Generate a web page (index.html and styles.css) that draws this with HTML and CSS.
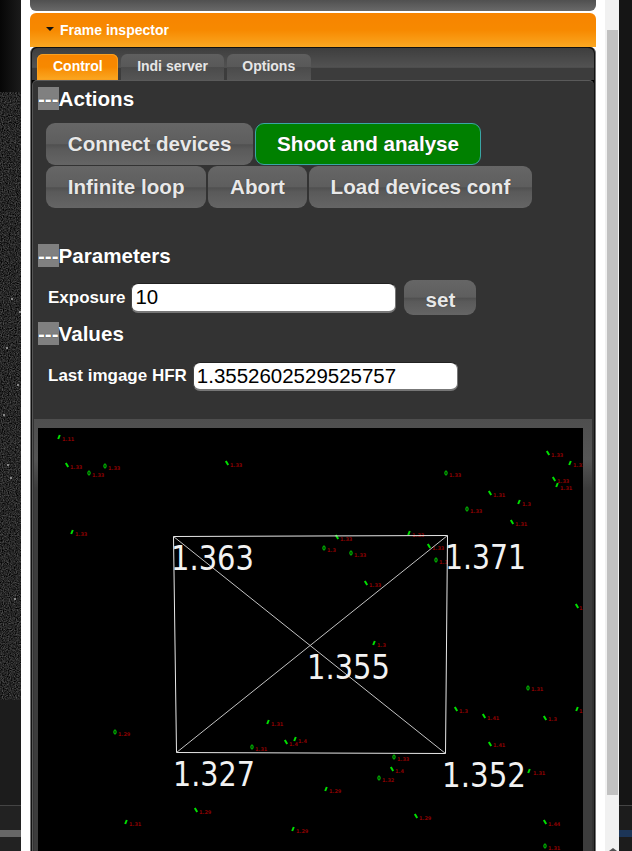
FILE: index.html
```html
<!DOCTYPE html>
<html lang="en">
<head>
<meta charset="utf-8">
<title>Frame inspector</title>
<link rel="stylesheet" href="styles.css">
</head>
<body>
<div class="screen">
  <div class="backdrop backdrop-left">
    <div class="bd-top"></div>
    <svg class="bd-noise" width="21" height="608" viewBox="0 92 21 608">
      <defs>
        <filter id="grain" x="0" y="0" width="100%" height="100%" color-interpolation-filters="sRGB">
          <feTurbulence type="fractalNoise" baseFrequency="0.85" numOctaves="2" seed="4"/>
          <feColorMatrix type="matrix" values="0.5 0 0 0 -0.1  0.5 0 0 0 -0.1  0.5 0 0 0 -0.1  0 0 0 0 1"/>
        </filter>
      </defs>
      <rect x="0" y="92" width="21" height="608" filter="url(#grain)"/>
      <g fill="#888">
        <rect x="11" y="298" width="2" height="2"/><rect x="19" y="311" width="2" height="2"/>
        <rect x="6" y="347" width="2" height="2"/><rect x="17" y="384" width="2" height="2"/>
        <rect x="3" y="414" width="2" height="2"/><rect x="7" y="464" width="2" height="2"/>
        <rect x="10" y="477" width="2" height="2"/><rect x="14" y="598" width="2" height="2"/>
      </g>
    </svg>
    <div class="bd-mid"></div>
    <div class="bd-bottom"><div class="bd-band"></div></div>
  </div>

  <div class="dialog">
    <div class="prev-bar"></div>
    <div class="accordion-head"><span class="caret"></span>Frame inspector</div>
    <div class="tabs">
      <div class="tab-bar">
        <span class="tab tab-active">Control</span>
        <span class="tab">Indi server</span>
        <span class="tab">Options</span>
      </div>
      <div class="tab-panel">
        <h3 class="section"><span class="toggle">---</span>Actions</h3>
        <div class="actions">
          <button class="btn">Connect devices</button>
          <button class="btn btn-go">Shoot and analyse</button>
          <button class="btn">Infinite loop</button>
          <button class="btn">Abort</button>
          <button class="btn">Load devices conf</button>
        </div>
        <h3 class="section section-params"><span class="toggle">---</span>Parameters</h3>
        <div class="field field-exposure">
          <label class="field-label">Exposure</label>
          <input class="field-input" value="10">
          <button class="btn btn-set">set</button>
        </div>
        <h3 class="section section-values"><span class="toggle">---</span>Values</h3>
        <div class="field field-hfr">
          <label class="field-label">Last imgage HFR</label>
          <input class="field-input" value="1.3552602529525757">
        </div>
        <div class="frame">
          <svg class="frame-img" width="545" height="423" viewBox="38 428 545 423">
            <defs>
              <path id="b" d="M-1.2 -2 L1.2 2"/>
              <path id="f" d="M-0.8 2 L0.8 -2"/>
              <ellipse id="o" cx="0" cy="0" rx="1.1" ry="2.2"/>
            </defs>
            <rect x="38" y="428" width="545" height="423" fill="#000"/>
            <g class="marks">
              <use href="#f" x="59" y="437"/><use href="#b" x="67" y="465"/><use href="#o" x="89" y="473"/>
              <use href="#o" x="105" y="466"/><use href="#b" x="227" y="463"/><use href="#f" x="72" y="532"/>
              <use href="#o" x="324" y="548"/><use href="#b" x="548" y="453"/><use href="#f" x="570" y="463"/>
              <use href="#o" x="446" y="473"/><use href="#b" x="554" y="479"/><use href="#f" x="557" y="485"/>
              <use href="#b" x="490" y="493"/><use href="#f" x="519" y="502"/><use href="#o" x="467" y="509"/>
              <use href="#b" x="512" y="522"/><use href="#f" x="409" y="533"/><use href="#b" x="337" y="537"/>
              <use href="#o" x="351" y="553"/><use href="#b" x="429" y="546"/><use href="#o" x="436" y="560"/>
              <use href="#b" x="366" y="583"/><use href="#b" x="577" y="606"/><use href="#f" x="374" y="643"/>
              <use href="#o" x="115" y="732"/><use href="#f" x="268" y="722"/><use href="#o" x="252" y="747"/>
              <use href="#b" x="286" y="742"/><use href="#f" x="295" y="739"/><use href="#b" x="196" y="810"/>
              <use href="#f" x="126" y="822"/><use href="#f" x="293" y="829"/><use href="#o" x="528" y="688"/>
              <use href="#b" x="456" y="709"/><use href="#b" x="484" y="716"/><use href="#b" x="545" y="718"/>
              <use href="#f" x="577" y="709"/><use href="#b" x="490" y="744"/><use href="#o" x="394" y="757"/>
              <use href="#b" x="392" y="769"/><use href="#o" x="379" y="778"/><use href="#f" x="326" y="789"/>
              <use href="#f" x="529" y="771"/><use href="#b" x="416" y="816"/><use href="#b" x="545" y="822"/>
              <use href="#o" x="545" y="846"/>
            </g>
            <g class="hfr-small">
              <text x="62" y="441">1.11</text><text x="70" y="469">1.33</text><text x="92" y="477">1.33</text>
              <text x="108" y="470">1.33</text><text x="230" y="467">1.33</text><text x="75" y="536">1.33</text>
              <text x="327" y="552">1.3</text><text x="551" y="457">1.33</text><text x="573" y="467">1.33</text>
              <text x="449" y="477">1.33</text><text x="557" y="483">1.33</text><text x="560" y="490">1.31</text>
              <text x="493" y="497">1.31</text><text x="522" y="506">1.3</text><text x="470" y="513">1.33</text>
              <text x="515" y="526">1.31</text><text x="412" y="537">1.33</text><text x="340" y="541">1.33</text>
              <text x="354" y="557">1.33</text><text x="432" y="550">1.33</text><text x="439" y="564">1.3</text>
              <text x="369" y="587">1.33</text><text x="579" y="610">1</text><text x="377" y="647">1.3</text>
              <text x="118" y="736">1.29</text><text x="271" y="726">1.31</text><text x="255" y="751">1.31</text>
              <text x="289" y="746">1.4</text><text x="298" y="743">1.4</text><text x="199" y="814">1.29</text>
              <text x="129" y="826">1.31</text><text x="296" y="833">1.29</text><text x="531" y="691">1.31</text>
              <text x="459" y="713">1.3</text><text x="487" y="720">1.41</text><text x="548" y="721">1.3</text>
              <text x="579" y="713">1</text><text x="493" y="747">1.41</text><text x="397" y="761">1.33</text>
              <text x="395" y="773">1.4</text><text x="382" y="782">1.32</text><text x="329" y="793">1.29</text>
              <text x="533" y="775">1.31</text><text x="419" y="820">1.29</text><text x="548" y="826">1.44</text>
              <text x="548" y="850">1.31</text>
            </g>
            <g class="grid-lines">
              <path d="M173.5 536.5 L447.5 535.5 L445.5 753.5 L176.5 752.5 Z"/>
              <path class="diag" d="M173.5 536.5 L445.5 753.5 M447.5 535.5 L176.5 752.5"/>
            </g>
            <g class="hfr-big">
              <text x="171" y="570" textLength="83" lengthAdjust="spacingAndGlyphs">1.363</text>
              <text x="445" y="569" textLength="81" lengthAdjust="spacingAndGlyphs">1.371</text>
              <text x="307" y="679" textLength="83" lengthAdjust="spacingAndGlyphs">1.355</text>
              <text x="173" y="786" textLength="82" lengthAdjust="spacingAndGlyphs">1.327</text>
              <text x="442" y="787" textLength="84" lengthAdjust="spacingAndGlyphs">1.352</text>
            </g>
          </svg>
        </div>
      </div>
    </div>
  </div>

  <div class="scrollbar">
    <div class="thumb"></div>
    <div class="arrow"></div>
  </div>

  <div class="backdrop backdrop-right">
    <div class="br-fill"></div>
    <div class="bd-bottom br-bottom"><div class="bd-band br-band"></div></div>
  </div>
</div>
</body>
</html>
```

FILE: styles.css
```css
* { box-sizing: border-box; }
html, body { margin: 0; height: 851px; overflow: hidden; background: #fff; }
body { font-family: "Liberation Sans", Arial, sans-serif; }

.screen { display: flex; width: 632px; height: 851px; overflow: hidden; }

/* page behind the dialog */
.backdrop { display: flex; flex-direction: column; flex: none; background: #151515; }
.backdrop-left { width: 21px; }
.backdrop-right { width: 13px; }
.bd-top { height: 92px; background: linear-gradient(90deg, #060606, #1b1b1b); }
.bd-noise { display: block; flex: none; }
.bd-mid { height: 105px; background: #1c1c1c; }
.bd-bottom { flex: 1; border-top: 1px solid #444; background: #222; padding-top: 24px; }
.bd-band { height: 7px; background: #666; }
.br-fill { height: 805px; }
.br-bottom { background: #1c1c1c; }
.br-band { background: #1c3557; }

/* dialog */
.dialog { width: 584px; flex: none; padding: 0 9px; background: #fff; display: flex; flex-direction: column; }
.prev-bar { height: 11px; flex: none; border-radius: 0 0 6px 6px; background: linear-gradient(#505050, #696969); }
.accordion-head {
  margin-top: 2px; height: 34px; flex: none; padding: 9px 0 0 16px;
  display: flex; align-items: flex-start;
  font-size: 14px; line-height: 16px; font-weight: bold; color: #fff;
  border-radius: 6px 6px 0 0;
  background: linear-gradient(#f78400 0, #f78900 50%, #fba822 100%);
}
.caret {
  width: 0; height: 0; margin: 5px 6px 0 0;
  border-left: 4.5px solid transparent; border-right: 4.5px solid transparent; border-top: 4px solid #111;
}

.tabs {
  flex: 1; display: flex; flex-direction: column; min-height: 0;
  margin: 0;
  border: 1px solid #777; border-top: 0; border-bottom: 0;
  background: #000;
  box-shadow: inset 1px 0 #111, inset -1px 0 #111;
  border-radius: 6px 6px 0 0;
}
.tab-bar {
  height: 33px; flex: none; display: flex; gap: 3px; align-items: flex-end;
  padding: 0 0 0 5.3px;
  margin: 0 1px;
  border-top: 1px solid #111;
  border-radius: 6px 6px 0 0;
  background: linear-gradient(#3e3e3e 0, #525252 60%, #3c3c3c 64%, #3c3c3c 100%);
}
.tab {
  height: 26px; padding: 5px 15.7px 0; flex: none;
  font-size: 14px; line-height: 15px; font-weight: bold; color: #e6e6e6;
  border-radius: 6px 6px 0 0;
  background: linear-gradient(#5f5f5f 0, #585858 50%, #4b4b4b 52%, #555 100%);
}
.tab-active {
  color: #fff;
  background: linear-gradient(#f78400 0, #f78900 50%, #fba822 100%);
  box-shadow: inset 0 0 0 1px #f9a020;
}

.tab-panel {
  flex: 1; margin: 0 1px; padding: 6px 0 0 1px;
  background: #333;
  border-top: 1px solid #5a5a5a;
  border-left: 1px solid #555;
  border-radius: 5px 5px 0 0;
  min-height: 0; overflow: hidden;
}

.section {
  margin: 0 0 0 4px; height: 23px;
  font-size: 20.6px; line-height: 23px; font-weight: bold; color: #fff; white-space: nowrap;
  text-shadow: 0 0 1px #222;
}
.toggle { background: #808080; }

.actions { display: flex; flex-wrap: wrap; gap: 1px 2px; margin: 13px 0 0 12px; }

.btn {
  height: 42px; padding: 0 21.8px; border: 0; border-radius: 9px;
  font-family: inherit; font-size: 20.6px; font-weight: bold; color: #e8e8e8;
  background: linear-gradient(#666 0, #5e5e5e 49%, #505050 52%, #5a5a5a 62%, #656565 100%);
  text-shadow: 0 0 1px #333;
}
.btn-go {
  color: #fff; background: #008000; border: 1px solid #3aa5a5; padding: 0 20.8px;
}
.btn-set { height: 35px; padding: 4px 21px 0; margin-left: 2px; border-radius: 9px; }

.section-params { margin-top: 36px; }
.section-values { margin-top: 7px; }

.field { display: flex; align-items: center; margin-left: 14px; }
.field-exposure { margin-top: 13px; height: 35px; }
.field-hfr { margin-top: 17px; height: 28px; }
.field-label { font-size: 17px; font-weight: bold; color: #fff; white-space: nowrap; margin-right: 6px; text-shadow: 0 0 1px #222; }
.field-input {
  width: 265px; height: 30px; padding: 0 3px;
  border: 0; border-top: 1px solid #222; border-bottom: 2px solid #777; border-right: 1px solid #777; border-left: 1px solid #444;
  border-radius: 7px; background: #fff; color: #000;
  font-family: inherit; font-size: 20.48px;
  margin-right: 6px;
}
.field-hfr .field-input { height: 29px; }

.frame {
  margin-top: 29px; margin-left: 0; width: 558px; padding: 9px 9px 0 4px;
  background: linear-gradient(#4e4e4e 0, #555 40px, #3c3c3c 70px, #3c3c3c 100%);
  height: 450px;
}
.frame-img { display: block; }

.marks use { stroke: #00e000; stroke-width: 2; fill: none; }
.marks use[href="#o"] { stroke-width: 1; }
.hfr-small text { font-family: "DejaVu Sans", sans-serif; font-size: 5px; font-weight: bold; fill: #8a0000; }
.grid-lines path { fill: none; stroke: #e8e8e8; stroke-width: 1; }
.grid-lines .diag { stroke: #c4c4c4; }
.hfr-big text { font-family: "DejaVu Sans", sans-serif; font-size: 34px; fill: #f2f2f2; }

/* scrollbar */
.scrollbar { width: 14px; flex: none; background: #f1f1f1; padding: 30px 1px 0 2px; position: relative; }
.thumb { height: 765px; background: #c1c1c1; }
.arrow {
  position: absolute; left: 4px; bottom: 0; width: 0; height: 0;
  border-left: 4px solid transparent; border-right: 4px solid transparent; border-bottom: 3px solid #505050;
}
```
